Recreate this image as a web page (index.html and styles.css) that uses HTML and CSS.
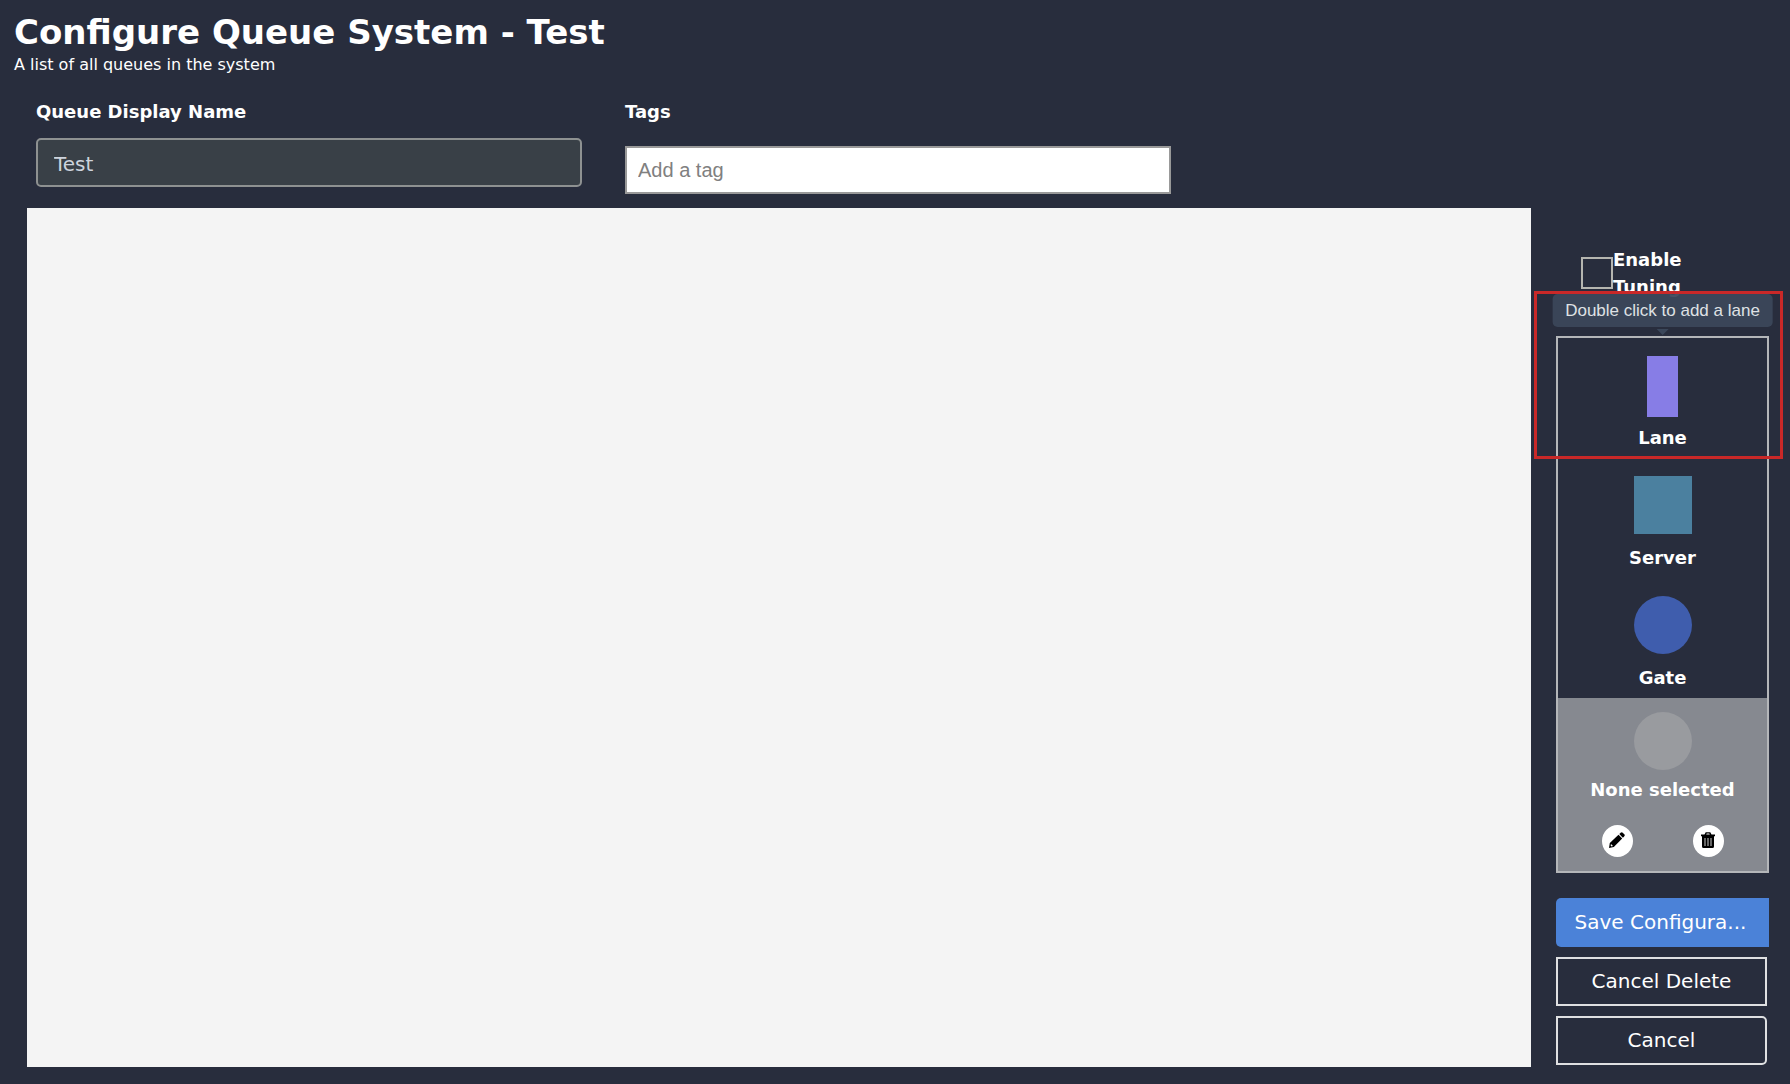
FILE: index.html
```html
<!DOCTYPE html>
<html lang="en">

<head>
    <meta charset="UTF-8">
    <meta name="viewport" content="width=device-width, initial-scale=1.0">
    <title>Configure Queue System</title>
    <link rel="stylesheet" href="styles.css">
</head>

<body>
    <header class="page-header">
        <h1>Configure Queue System - Test</h1>
        <p>A list of all queues in the system</p>
    </header>

    <div class="form-row">
        <div class="field">
            <label for="queue-name">Queue Display Name</label>
            <input type="text" id="queue-name" class="name-input" value="Test">
        </div>
        <div class="field">
            <label for="queue-tags">Tags</label>
            <input type="text" id="queue-tags" class="tag-input" placeholder="Add a tag">
        </div>
    </div>

    <main class="workspace">
        <div class="canvas"></div>

        <aside class="sidebar">
            <div class="tuning">
                <input type="checkbox" id="enable-tuning">
                <label for="enable-tuning">Enable Tuning</label>
            </div>

            <div class="palette">
                <div class="palette-item">
                    <div class="shape lane"></div>
                    <span>Lane</span>
                    <div class="tooltip" role="tooltip">Double click to add a lane</div>
                    <div class="highlight"></div>
                </div>
                <div class="palette-item">
                    <div class="shape server"></div>
                    <span>Server</span>
                </div>
                <div class="palette-item">
                    <div class="shape gate"></div>
                    <span>Gate</span>
                </div>
                <div class="selection">
                    <div class="shape none"></div>
                    <span>None selected</span>
                    <div class="selection-actions">
                        <button type="button" class="icon-btn" aria-label="Edit">
                            <svg viewBox="0 0 16 16" width="16" height="16">
                                <path d="M0 16 .8 11 9.500 2.800l3.700 3.700L4.800 15z" />
                                <path d="M10.300 2.100 11.700.7a1.500 1.500 0 0 1 2 0l1.600 1.600a1.500 1.500 0 0 1 0 2L13.900 5.700z" />
                                <path d="M2 12 4 14 2.500 14.400 1.600 13.500z" fill="#fff" />
                            </svg>
                        </button>
                        <button type="button" class="icon-btn" aria-label="Delete">
                            <svg viewBox="0 0 16 16" width="16" height="16">
                                <path d="M4.500 2.500 5.700.3h4.600l1.200 2.200H15V4.200H1V2.500zm1.700 0h3.600L9.300 1.500H6.700z" fill-rule="evenodd" />
                                <path d="M2 4h12v10.500a1.500 1.500 0 0 1-1.500 1.500h-9A1.500 1.500 0 0 1 2 14.500z" />
                                <path d="M5 6v8M8 6v8M11 6v8" stroke="#ccc" />
                            </svg>
                        </button>
                    </div>
                </div>
            </div>

            <div class="actions">
                <button type="button" class="btn btn-save">Save Configura...</button>
                <button type="button" class="btn btn-outline">Cancel Delete</button>
                <button type="button" class="btn btn-outline btn-last">Cancel</button>
            </div>
        </aside>
    </main>
</body>

</html>
```
FILE: styles.css
```css
* {
    margin: 0;
    padding: 0;
    box-sizing: border-box;
}

body {
    min-height: 100vh;
    background-color: #282d3d;
    color: #fff;
    font-family: "DejaVu Sans", Verdana, sans-serif;
    font-size: 18px;
}

.page-header {
    padding: 10px 14px 0;
}

.page-header h1 {
    font-size: 34px;
    line-height: 44px;
}

.page-header p {
    font-size: 16px;
    line-height: 22px;
}

.form-row {
    display: grid;
    grid-template-columns: repeat(3, 1fr);
    gap: 43px;
    padding: 22px 30px 0 36px;
}

.field label {
    display: block;
    font-weight: bold;
    line-height: 28px;
}

.field input {
    display: block;
    width: 100%;
    font-size: 20px;
}

.name-input {
    height: 49px;
    margin-top: 12px;
    padding: 2px 16px 0;
    border: 2px solid #8e9191;
    border-radius: 5px;
    background-color: #394047;
    color: #cdd4dd;
    font-family: inherit;
}

.tag-input {
    height: 48px;
    margin-top: 20px;
    padding: 0 11px;
    border: 2px solid #999;
    background-color: #fff;
    font-family: "Liberation Sans", Arial, sans-serif;
}

.tag-input::placeholder {
    color: #808080;
}

.workspace {
    display: flex;
    gap: 25px;
    padding: 14px 21px 17px 27px;
}

.canvas {
    flex: 1;
    background-color: #f4f4f4;
}

.sidebar {
    width: 213px;
    padding: 38px 0 2px;
}

.tuning {
    display: flex;
    align-items: center;
    padding: 0 25px;
}

.tuning input {
    appearance: none;
    flex: none;
    width: 32px;
    height: 32px;
    border: 2px solid #b5b5b0;
}

.tuning label {
    font-weight: bold;
    line-height: 27px;
}

.palette {
    margin-top: 36px;
    border: 2px solid #b4b6b9;
    font-weight: bold;
}

.palette-item,
.selection {
    position: relative;
    display: flex;
    flex-direction: column;
    align-items: center;
}

.palette-item {
    height: 120px;
    padding-top: 18px;
}

.palette-item span,
.selection span {
    line-height: 24px;
}

.palette-item span {
    margin-top: 12px;
}

.palette-item .lane + span {
    margin-top: 9px;
}

.shape {
    width: 58px;
    height: 58px;
}

.lane {
    width: 31px;
    height: 61px;
    background-color: #877de6;
}

.server {
    background-color: #4b809f;
}

.gate {
    border-radius: 50%;
    background-color: #3f5dad;
}

.none {
    border-radius: 50%;
    background-color: #999b9f;
}

.tooltip {
    position: absolute;
    bottom: 100%;
    left: 50%;
    margin-bottom: 11px;
    padding: 0 13px;
    transform: translateX(-50%);
    border-radius: 5px;
    background-color: #3b475af0;
    color: #dfe1e4;
    font: 17px/33px "Liberation Sans", Arial, sans-serif;
    white-space: nowrap;
}

.tooltip::after {
    content: "";
    position: absolute;
    top: 100%;
    left: 50%;
    margin-top: 2px;
    transform: translateX(-50%);
    border-top: 6px solid #3b475a;
    border-left: 6px solid transparent;
    border-right: 6px solid transparent;
}

/* Red frame around the lane and its tooltip */
.highlight {
    position: absolute;
    inset: -47px -16px -1px -24px;
    border: 3px solid #c92828;
    pointer-events: none;
}

.selection {
    padding: 14px 0 14px;
    background-color: #868990;
}

.selection span {
    margin-top: 8px;
}

.selection-actions {
    display: flex;
    gap: 60px;
    margin-top: 23px;
}

.icon-btn {
    display: flex;
    align-items: center;
    justify-content: center;
    width: 31px;
    height: 32px;
    padding-bottom: 3px;
    border: none;
    border-radius: 50%;
    background-color: #fff;
    cursor: pointer;
}

.actions {
    display: flex;
    flex-direction: column;
    gap: 10px;
    margin-top: 25px;
}

.btn {
    height: 49px;
    padding-bottom: 2px;
    border: none;
    color: #fff;
    font-family: inherit;
    font-size: 20px;
    cursor: pointer;
}

.btn-save {
    padding-right: 4px;
    border-radius: 5px 0 0 5px;
    background-color: #4b82d8;
}

.btn-outline {
    margin-right: 2px;
    border: 2px solid #dfe0e2;
    background-color: transparent;
}

.btn-last {
    border-radius: 0 5px 5px 0;
}
```
